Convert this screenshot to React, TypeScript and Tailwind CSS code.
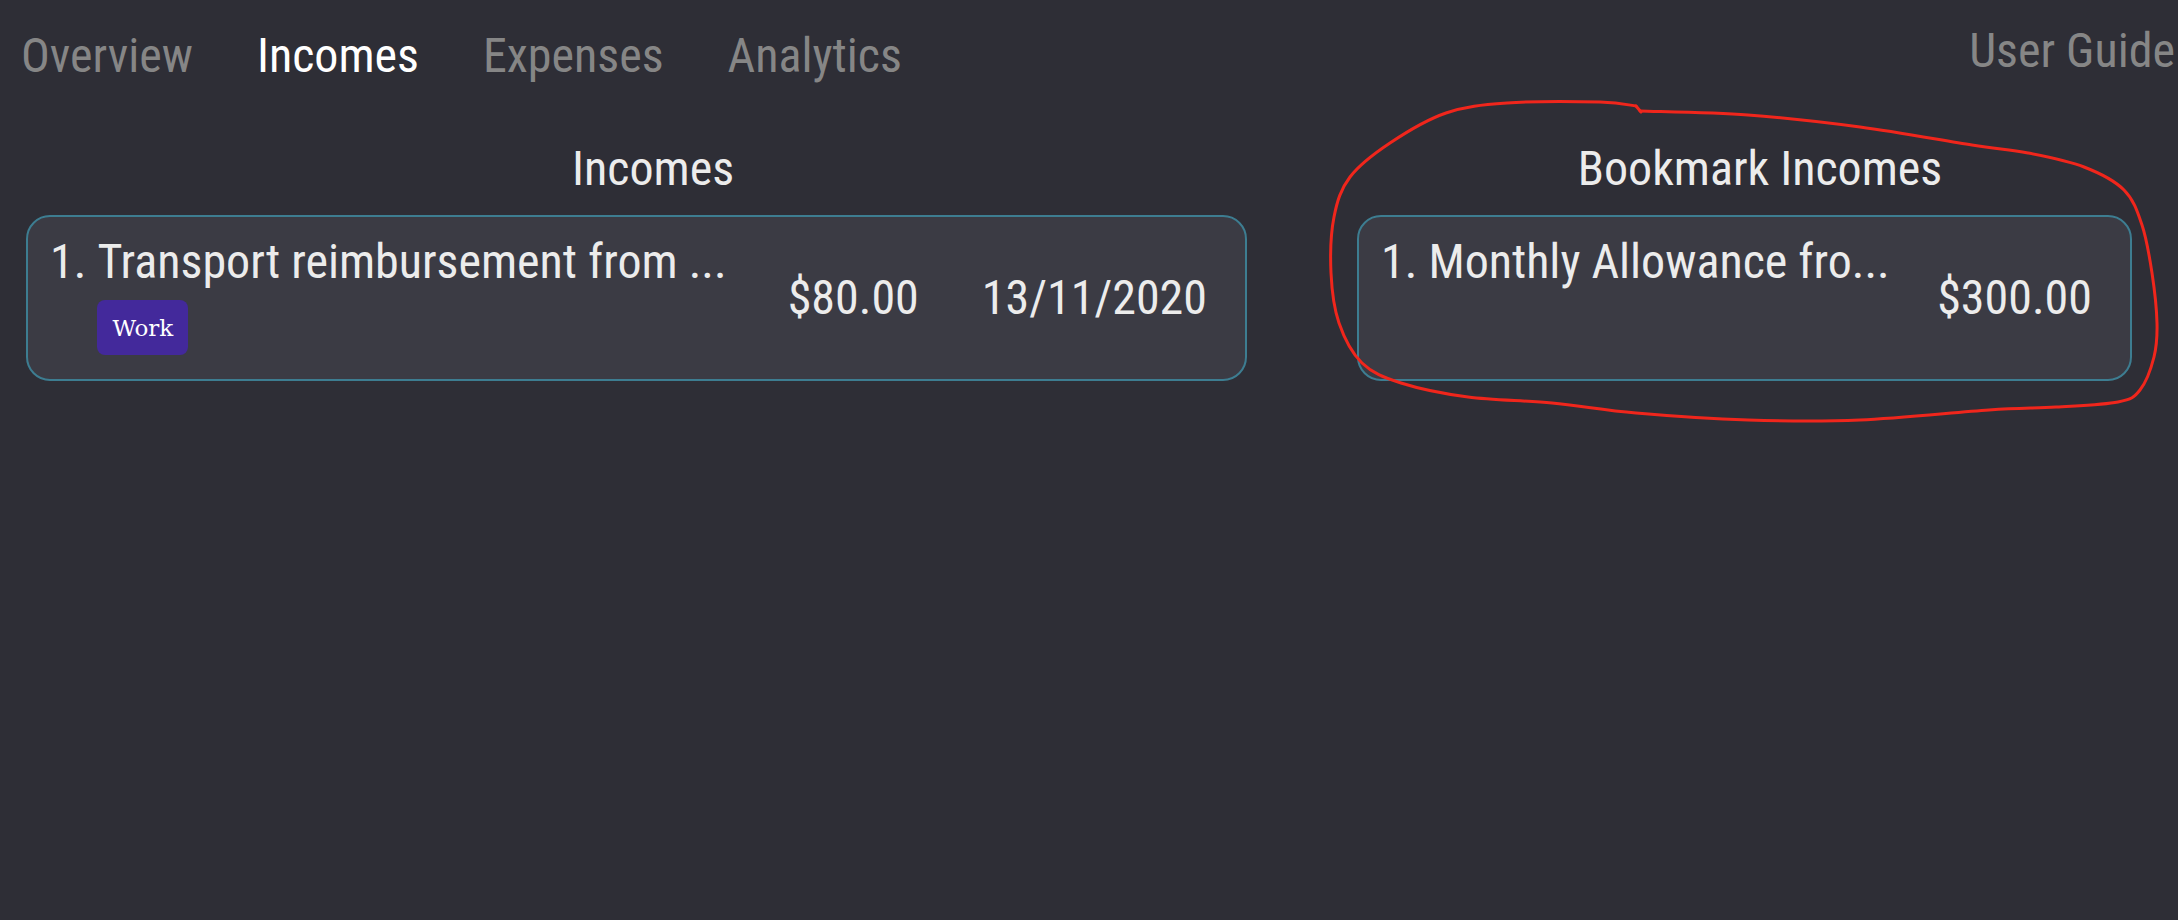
import { useMemo } from "react";

type Income = {
  name: string;
  amount: string;
  date?: string;
  tags: string[];
};

const incomes: Income[] = [
  { name: "Transport reimbursement from ...", amount: "$80.00", date: "13/11/2020", tags: ["Work"] },
];

const bookmarks: Income[] = [{ name: "Monthly Allowance fro...", amount: "$300.00", tags: [] }];

const tabs = ["Overview", "Incomes", "Expenses", "Analytics"];

// hand-drawn red loop around the bookmark panel
const loop: [number, number][] = [
  [1640, 111], [1748, 115], [1860, 127], [1972, 145], [2028, 153], [2084, 167],
  [2124, 190], [2142, 225], [2152, 273], [2157, 323], [2154, 357], [2140, 390],
  [2118, 402], [2056, 407], [1989, 410], [1860, 420], [1748, 420], [1636, 413],
  [1552, 403], [1468, 397], [1401, 383], [1362, 363], [1339, 323], [1331, 273],
  [1334, 217], [1350, 177], [1390, 143], [1446, 113], [1507, 103], [1600, 102],
  [1636, 106],
];

const toPath = (pts: [number, number][]) => {
  let d = `M${pts[0][0]},${pts[0][1]}`;
  for (let i = 0; i < pts.length - 1; i++) {
    const p0 = pts[Math.max(i - 1, 0)];
    const p1 = pts[i];
    const p2 = pts[i + 1];
    const p3 = pts[Math.min(i + 2, pts.length - 1)];
    const c1x = p1[0] + (p2[0] - p0[0]) / 6;
    const c1y = p1[1] + (p2[1] - p0[1]) / 6;
    const c2x = p2[0] - (p3[0] - p1[0]) / 6;
    const c2y = p2[1] - (p3[1] - p1[1]) / 6;
    d += ` C${c1x},${c1y} ${c2x},${c2y} ${p2[0]},${p2[1]}`;
  }
  return d;
};

const IncomeCard = ({ item, index }: { item: Income; index: number }) => {
  return (
    <div className="h-[166px] rounded-[24px] border-2 border-[#3d7d91] bg-[#3b3b44] pl-[22px] pr-[38px] flex items-center">
      <div className="flex-1 self-start pt-[21px] flex">
        <span className="whitespace-pre">{index + 1}. </span>
        <div className="flex flex-col">
          <span className="whitespace-nowrap">{item.name}</span>
          {item.tags.length !== 0 && (
            <div className="mt-[14px] flex gap-2">
              {item.tags.map((tag) => (
                <span
                  key={tag}
                  className="h-[55px] px-[15px] flex items-center rounded-[8px] bg-[#43299b] text-white text-[23px] font-['DejaVu_Serif',serif]"
                >
                  {tag}
                </span>
              ))}
            </div>
          )}
        </div>
      </div>
      <div className="flex items-center gap-[63px]">
        <span>{item.amount}</span>
        {item.date && <span>{item.date}</span>}
      </div>
    </div>
  );
};

const App = () => {
  const loopPath = useMemo(() => toPath(loop), []);

  return (
    <div className="relative h-screen overflow-hidden bg-[#2e2e36] text-[#ececec] text-[48px] leading-[48px] font-['Roboto_Condensed',Roboto,sans-serif]">
      <div className="flex items-start justify-between pt-[27px] pl-[21px] pr-[3px]">
        <div className="flex gap-[64px] pt-[5px]">
          {tabs.map((tab) => (
            <span key={tab} className={tab === "Incomes" ? "text-white" : "text-[#868686]"}>
              {tab}
            </span>
          ))}
        </div>
        <span className="text-[#868686] whitespace-nowrap">User Guide</span>
      </div>

      <div className="grid grid-cols-[1254px_806px] gap-[77px] pl-[26px] mt-[65px]">
        <div className="flex flex-col">
          <div className="text-center">Incomes</div>
          <div className="mt-[22px] mr-[33px] flex flex-col gap-3">
            {incomes.map((item, i) => (
              <IncomeCard key={i} item={item} index={i} />
            ))}
          </div>
        </div>
        <div className="flex flex-col">
          <div className="text-center">Bookmark Incomes</div>
          <div className="mt-[22px] mr-[31px] flex flex-col gap-3">
            {bookmarks.map((item, i) => (
              <IncomeCard key={i} item={item} index={i} />
            ))}
          </div>
        </div>
      </div>

      <svg className="pointer-events-none absolute inset-0" width="2178" height="920" viewBox="0 0 2178 920">
        <path d={loopPath} fill="none" stroke="#f0261c" strokeWidth="3" strokeLinecap="round" strokeLinejoin="round" />
        <path d="M1636,106 L1641,112" fill="none" stroke="#f0261c" strokeWidth="3" strokeLinecap="round" />
      </svg>
    </div>
  );
};

export default App;
